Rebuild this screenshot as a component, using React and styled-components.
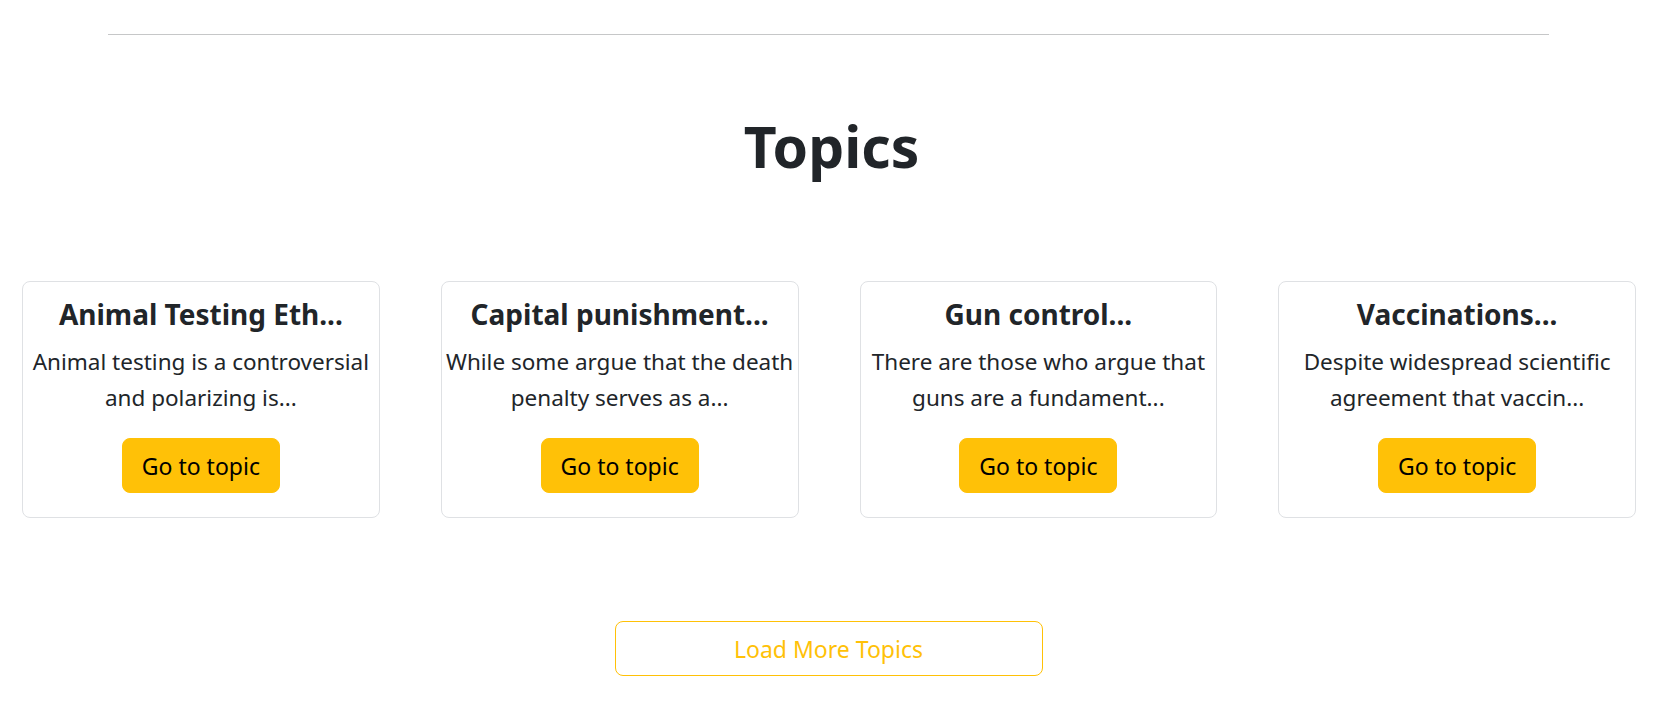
import React from 'react';
import styled, { createGlobalStyle } from 'styled-components';

const GlobalStyle = createGlobalStyle`
  * {
    box-sizing: border-box;
  }
  body {
    margin: 0;
    background: #fff;
    color: #212529;
    font-family: 'Noto Sans', 'Open Sans', sans-serif;
  }
`;

const topics = [
  {
    id: 1,
    title: 'Animal Testing Eth...',
    summary: 'Animal testing is a controversial and polarizing is...',
  },
  {
    id: 2,
    title: 'Capital punishment...',
    summary: 'While some argue that the death penalty serves as a...',
  },
  {
    id: 3,
    title: 'Gun control...',
    summary: 'There are those who argue that guns are a fundament...',
  },
  {
    id: 4,
    title: 'Vaccinations...',
    summary: 'Despite widespread scientific agreement that vaccin...',
  },
];

const Page = styled.div`
  display: flex;
  flex-direction: column;
  min-height: 100vh;
  padding-top: 34px;
`;

const Divider = styled.hr`
  margin: 0 114px 0 108px;
  border: 0;
  border-top: 1px solid #c6c7c8;
`;

const Heading = styled.h1`
  margin: 77px 0 0;
  text-align: center;
  font-size: 57px;
  line-height: 1.2;
  font-weight: 700;
  color: #212529;
`;

const CardGrid = styled.div`
  display: grid;
  grid-template-columns: repeat(4, 1fr);
  column-gap: 61px;
  padding: 0 27px 0 22px;
  margin-top: 101px;
`;

const Card = styled.div`
  display: flex;
  flex-direction: column;
  align-items: center;
  height: 237px;
  padding: 14px 3px 0;
  border: 1px solid #dfe1e4;
  border-radius: 8px;
  text-align: center;
`;

const CardTitle = styled.h3`
  margin: 0 0 12px;
  font-size: 28px;
  line-height: 36px;
  font-weight: 700;
  color: #212529;
`;

const CardText = styled.p`
  margin: 0 0 22px;
  font-size: 22.5px;
  line-height: 36px;
  color: #212529;
`;

const TopicButton = styled.button`
  height: 55px;
  padding: 0 19px;
  border: 1px solid #ffc107;
  border-radius: 8px;
  background: #ffc107;
  color: #000;
  font-family: inherit;
  font-size: 23px;
  cursor: pointer;
`;

const MoreRow = styled.div`
  display: flex;
  justify-content: center;
  margin-top: 103px;
`;

const LoadMoreButton = styled.button`
  width: 428px;
  height: 55px;
  margin-left: -6px;
  border: 1px solid #ffc107;
  border-radius: 8px;
  background: #fff;
  color: #ffc107;
  font-family: inherit;
  font-size: 23px;
  cursor: pointer;
`;

const TopicCard = ({ title, summary }) => (
  <Card>
    <CardTitle>{title}</CardTitle>
    <CardText>{summary}</CardText>
    <TopicButton>Go to topic</TopicButton>
  </Card>
);

const App = () => {
  return (
    <>
      <GlobalStyle />
      <Page>
        <Divider />
        <Heading>Topics</Heading>
        <CardGrid>
          {topics.map((topic) => (
            <TopicCard key={topic.id} title={topic.title} summary={topic.summary} />
          ))}
        </CardGrid>
        <MoreRow>
          <LoadMoreButton>Load More Topics</LoadMoreButton>
        </MoreRow>
      </Page>
    </>
  );
};

export default App;
